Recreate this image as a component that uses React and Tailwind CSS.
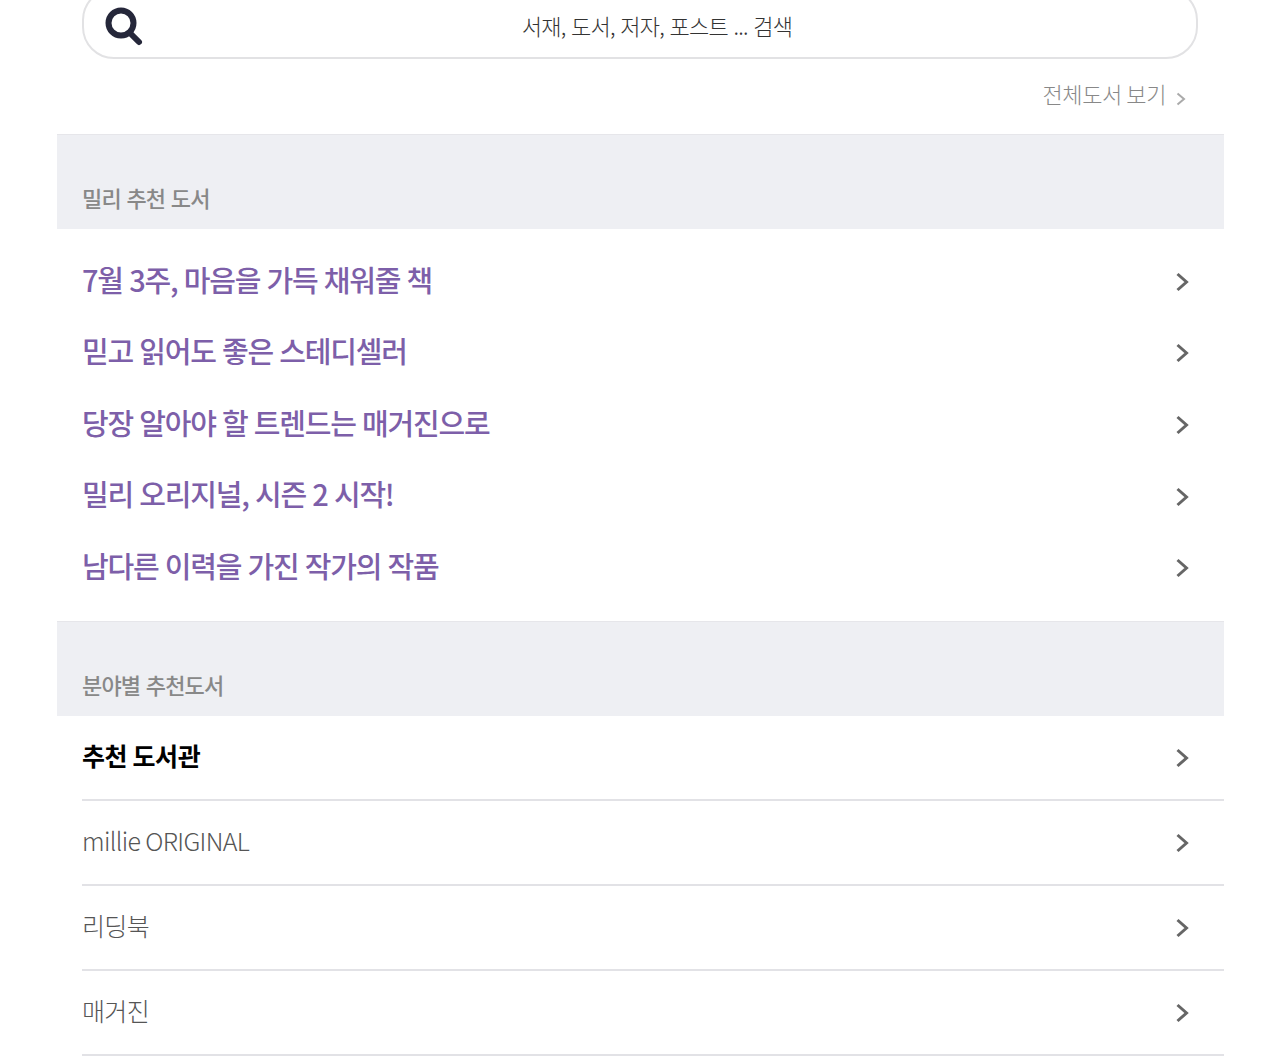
const font = { fontFamily: '"Noto Sans CJK KR", "Noto Sans", sans-serif' };

const picks = [
  "7월 3주, 마음을 가득 채워줄 책",
  "믿고 읽어도 좋은 스테디셀러",
  "당장 알아야 할 트렌드는 매거진으로",
  "밀리 오리지널, 시즌 2 시작!",
  "남다른 이력을 가진 작가의 작품",
];

const categories = ["millie ORIGINAL", "리딩북", "매거진"];

const Arrow = () => (
  <svg width="13" height="20" viewBox="0 0 13 20" fill="none" className="mr-[35px] mt-[2px] shrink-0">
    <path d="M1.5 2 L10.5 10 L1.5 18" stroke="#666666" strokeWidth="3" />
  </svg>
);

const SectionTitle = ({ children }) => (
  <div className="h-[95px] bg-[#eeeff3] border-t border-[#e6e6ea] pl-[25px] pt-[47px]">
    <h2 className="text-[22px] leading-[30px] tracking-[-0.85px] [word-spacing:1.5px] font-medium text-[#888888]">{children}</h2>
  </div>
);

const App = () => {
  return (
    <div className="w-[1280px] h-[1057px] overflow-hidden bg-white pl-[57px] pr-[56px]" style={font}>
      <div className="pl-[25px] pr-[26px]">
        <div className="relative -mt-[12px] h-[71px] rounded-[32px] border-2 border-[#e2e2e4] flex items-center justify-center">
          <svg width="40" height="40" viewBox="0 0 40 40" fill="none" className="absolute left-[20px] top-[17px]">
            <circle cx="17" cy="16" r="12.5" stroke="#25273a" strokeWidth="6" />
            <path d="M26 26 L35 35" stroke="#25273a" strokeWidth="6" strokeLinecap="round" />
          </svg>
          <span className="ml-[34px] mt-[2px] text-[22px] leading-[30px] tracking-[-0.8px] [word-spacing:1.6px] font-light text-[#333333]">
            서재, 도서, 저자, 포스트 ... 검색
          </span>
        </div>
      </div>

      <div className="h-[75px] flex items-center justify-end pr-[38px] gap-[10px]">
        <span className="mb-[6px] text-[22px] tracking-[-0.4px] font-light text-[#888888]">전체도서 보기</span>
        <svg width="10" height="14" viewBox="0 0 10 14" fill="none" className="mt-[5px]">
          <path d="M1.5 1.5 L8 7 L1.5 12.5" stroke="#aaaaaa" strokeWidth="2" />
        </svg>
      </div>

      <SectionTitle>밀리 추천 도서</SectionTitle>

      <div className="pt-[16px] pb-[18px] pl-[25px]">
        {picks.map((pick) => (
          <div key={pick} className="h-[71.6px] flex items-center justify-between">
            <span className="mb-[3px] text-[29px] tracking-[-1.2px] [word-spacing:1px] font-medium text-[#7d5fa9]">{pick}</span>
            <Arrow />
          </div>
        ))}
      </div>

      <SectionTitle>분야별 추천도서</SectionTitle>

      <div className="pl-[25px]">
        <div className="h-[85px] border-b-2 border-[#e2e2e6] flex items-center justify-between">
          <span className="mb-[3px] text-[25px] tracking-[-0.4px] font-bold text-black">추천 도서관</span>
          <Arrow />
        </div>
        {categories.map((category) => (
          <div key={category} className="h-[85px] border-b-2 border-[#e2e2e6] flex items-center justify-between">
            <span className="mb-[3px] text-[25px] tracking-[-0.65px] font-light text-[#555555]">{category}</span>
            <Arrow />
          </div>
        ))}
      </div>
    </div>
  );
};

export default App;
